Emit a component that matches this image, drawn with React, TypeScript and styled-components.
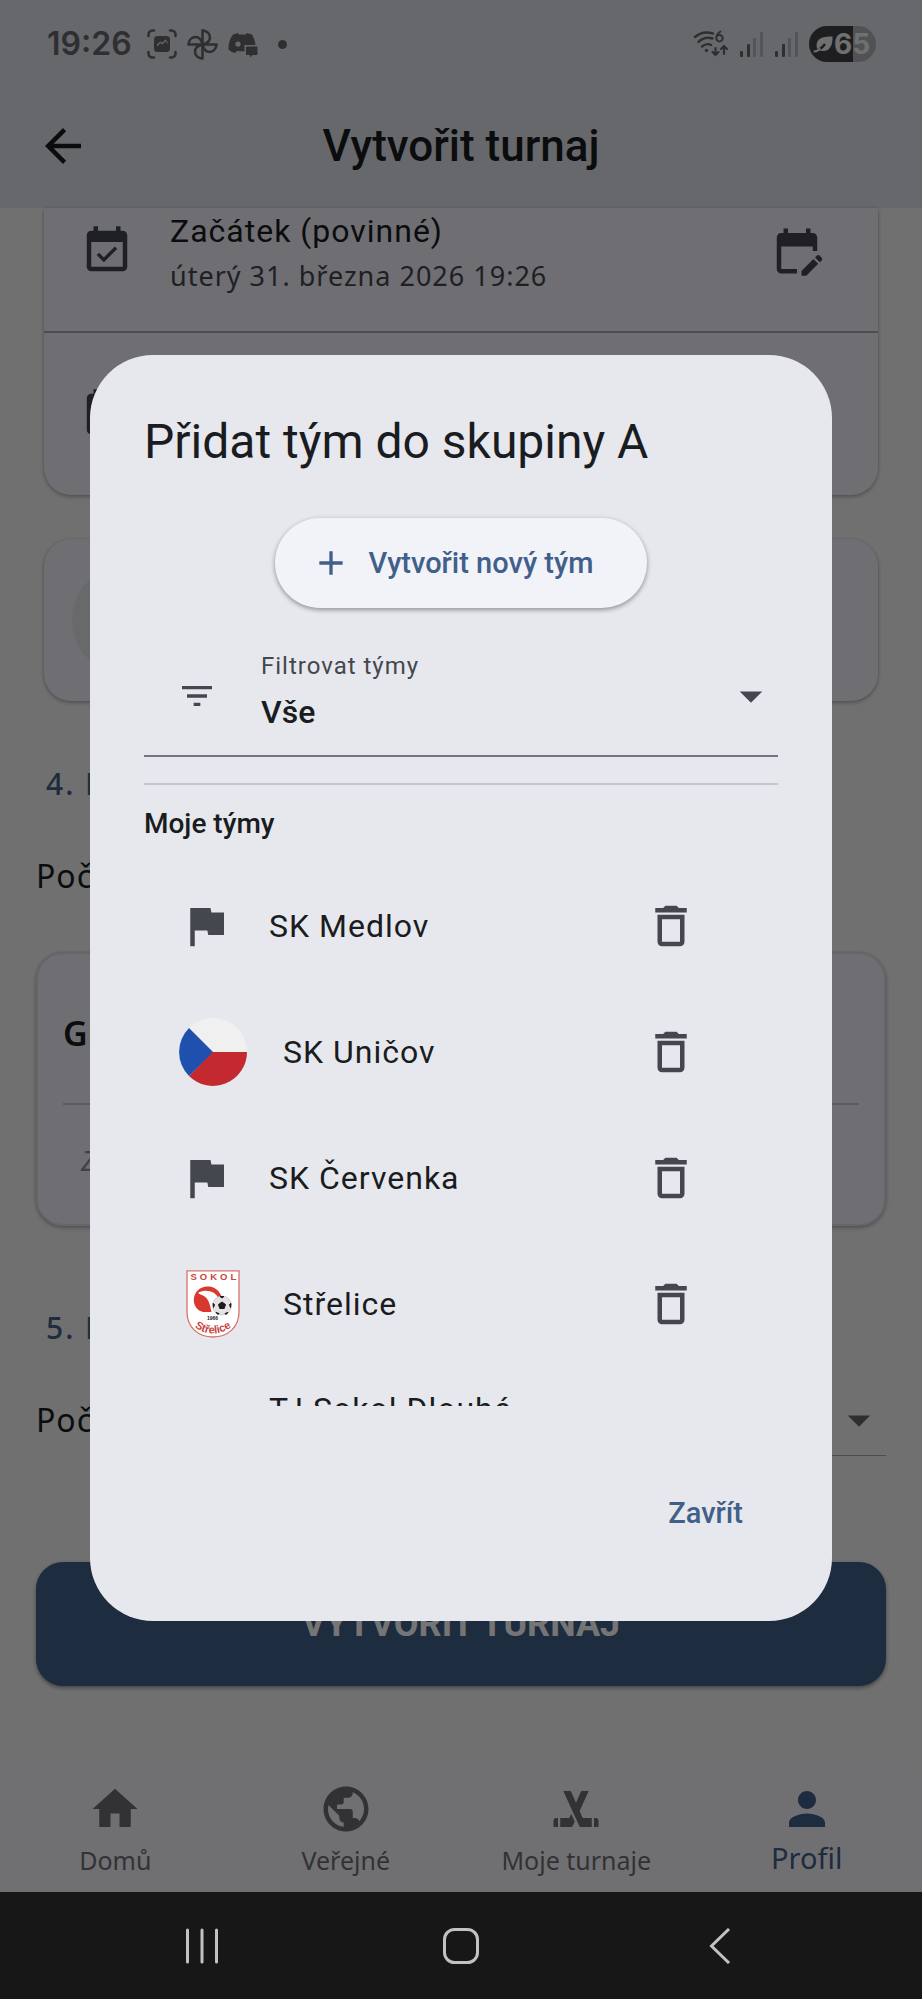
import React from "react";
import styled, { createGlobalStyle } from "styled-components";
import {
  MdAdd,
  MdArrowBack,
  MdArrowDropDown,
  MdDeleteOutline,
  MdEditCalendar,
  MdEvent,
  MdEventAvailable,
  MdFilterList,
  MdFlag,
  MdHome,
  MdPerson,
  MdPublic,
  MdSportsHockey,
} from "react-icons/md";

const c = {
  page: "#f5f5f6",
  bar: "#e1e3e9",
  card: "#f1f0f8",
  line: "#c4c6cf",
  outline: "#73777f",
  text: "#191c20",
  muted: "#44474e",
  primary: "#40608a",
  dialog: "#e7e8ed",
};

const roboto = `Roboto, "Noto Sans", sans-serif`;
const noto = `"Noto Sans", "Open Sans", sans-serif`;

const GlobalStyle = createGlobalStyle`
  *, *::before, *::after { box-sizing: border-box; }
  body { margin: 0; background: #171717; }
  button, select { font: inherit; color: inherit; border: 0; background: none; padding: 0; margin: 0; }
  h1, h2, h3, p, ul { margin: 0; padding: 0; font-weight: inherit; }
  ul { list-style: none; }
  svg { display: block; flex: none; }
`;

const Screen = styled.div`
  display: flex;
  flex-direction: column;
  min-height: 100vh;
  font-family: ${roboto};
  color: ${c.text};
`;

const AppArea = styled.div`
  position: relative;
  flex: 1;
  display: flex;
  flex-direction: column;
  background: ${c.page};
`;

const Header = styled.header`
  background: ${c.bar};
`;

const StatusBar = styled.div`
  display: flex;
  align-items: center;
  justify-content: space-between;
  height: 88px;
  padding: 0 46px 0 47px;
  color: #66686e;
`;

const StatusGroup = styled.div`
  display: flex;
  align-items: center;
  gap: 10px;
`;

const Clock = styled.span`
  font: 600 32px/40px Inter, ${roboto};
  margin-right: 5px;
`;

const Dot = styled.span`
  width: 9px;
  height: 9px;
  margin-left: 10px;
  border-radius: 50%;
  background: currentColor;
`;

const Battery = styled.div`
  display: flex;
  align-items: center;
  width: 67px;
  height: 36px;
  padding-left: 4px;
  border-radius: 18px;
  background: linear-gradient(to right, #434346 44px, #b1b2b7 44px);
  color: #f4f4f6;
  font: 700 28px/36px Inter, ${roboto};
`;

const AppBar = styled.div`
  display: grid;
  grid-template-columns: 54px 1fr 54px;
  align-items: center;
  height: 120px;
  padding: 0 36px 4px;
`;

const PageTitle = styled.h1`
  font-size: 44px;
  line-height: 56px;
  font-weight: 500;
  text-align: center;
`;

const IconButton = styled.button`
  display: flex;
  align-items: center;
  justify-content: center;
  cursor: pointer;
`;

const Main = styled.main`
  flex: 1;
  display: flex;
  flex-direction: column;
  padding: 0 36px 76px;
`;

const Card = styled.section<{ $attached?: boolean; $wide?: boolean }>`
  margin: 0 ${(p) => (p.$wide ? 0 : 8)}px;
  border-radius: ${(p) => (p.$attached ? "0 0 27px 27px" : "27px")};
  background: ${c.card};
  box-shadow: 0 2px 4px rgba(0, 0, 0, 0.26), 0 0 3px rgba(0, 0, 0, 0.12);
`;

const DateRow = styled.div<{ $first?: boolean }>`
  display: flex;
  align-items: center;
  gap: 36px;
  height: ${(p) => (p.$first ? 125 : 162)}px;
  padding: ${(p) => (p.$first ? "0 54px 38px 36px" : "0 54px 0 36px")};
  border-bottom: ${(p) => (p.$first ? "2px solid #a9abb2" : "0")};
  & > svg {
    color: ${c.muted};
  }
`;

const DateText = styled.div`
  flex: 1;
  display: flex;
  flex-direction: column;
  gap: 3px;
  padding-top: 5px;
  letter-spacing: 1px;
`;

const BodyLarge = styled.span`
  font-size: 32px;
  line-height: 42px;
  letter-spacing: 1px;
`;

const BodyMedium = styled.span`
  font: 27px/42px ${noto};
  color: ${c.muted};
`;

const AvatarCard = styled(Card)`
  margin-top: 44px;
  padding: 27px 28px;
`;

const Avatar = styled.div`
  width: 108px;
  height: 108px;
  border-radius: 50%;
  background: #e2e4e9;
`;

const SectionTitle = styled.h2<{ $spaced?: boolean }>`
  margin: ${(p) => (p.$spaced ? 82 : 63)}px 10px 50px;
  font: 500 30px/40px ${noto};
  letter-spacing: 2px;
  color: ${c.primary};
`;

const FieldRow = styled.div`
  display: flex;
  justify-content: space-between;
  font: 32px/44px ${noto};
  letter-spacing: 1px;
`;

const GroupCard = styled(Card)`
  height: 274px;
  margin-top: 54px;
  padding: 55px 25px 0;
  border: 2px solid #dddee4;
`;

const GroupTitle = styled.h3`
  padding-bottom: 46px;
  border-bottom: 2px solid ${c.line};
  font: 600 34px/48px ${noto};
`;

const GroupEmpty = styled.p`
  padding: 34px 18px;
  font: italic 28px/42px ${noto};
  color: #8f9198;
`;

const CountSelect = styled.div`
  display: flex;
  align-items: center;
  height: 58px;
  padding-bottom: 13px;
  border-bottom: 1px solid #a5a6ab;
  & > svg {
    color: #666;
  }
`;

const CountInput = styled.select`
  width: 180px;
  appearance: none;
`;

const SubmitButton = styled.button`
  height: 124px;
  margin-top: 106px;
  border-radius: 27px;
  background: ${c.primary};
  box-shadow: 0 2px 4px rgba(0, 0, 0, 0.4);
  color: #fff;
  font-size: 36px;
  font-weight: 700;
`;

const BottomNav = styled.nav`
  display: grid;
  grid-template-columns: repeat(4, 1fr);
  height: 130px;
  background: #f5f5f8;
`;

const NavItem = styled.a<{ $active?: boolean }>`
  display: flex;
  flex-direction: column;
  align-items: center;
  padding-top: 20px;
  gap: ${(p) => (p.$active ? 2 : 4)}px;
  font: ${(p) => (p.$active ? 29 : 25)}px/40px ${noto};
  color: ${(p) => (p.$active ? c.primary : "#6d6e72")};
  text-decoration: none;
`;

const SystemNav = styled.footer`
  display: flex;
  align-items: center;
  justify-content: space-between;
  height: 108px;
  padding: 0 184px;
  background: #171717;
  color: #c2c2c2;
`;

const Scrim = styled.div`
  position: absolute;
  inset: 0;
  display: flex;
  align-items: center;
  padding: 84px 90px 0;
  background: rgba(0, 0, 0, 0.54);
`;

const Dialog = styled.div`
  flex: 1;
  padding: 54px;
  border-radius: 63px;
  background: ${c.dialog};
`;

const DialogTitle = styled.h2`
  font-size: 48px;
  line-height: 65px;
`;

const CreateButton = styled.button`
  display: flex;
  align-items: center;
  gap: 18px;
  height: 90px;
  margin: 44px auto 28px;
  padding: 0 54px 0 36px;
  border-radius: 45px;
  background: #f1f3f9;
  box-shadow: 0 2px 4px rgba(0, 0, 0, 0.3), 0 1px 6px rgba(0, 0, 0, 0.1);
  color: ${c.primary};
  font-size: 29px;
  font-weight: 500;
  cursor: pointer;
`;

const Filter = styled.div`
  display: flex;
  align-items: center;
  height: 121px;
  padding-left: 33px;
  border-bottom: 2px solid ${c.outline};
  color: ${c.muted};
`;

const FilterField = styled.div`
  flex: 1;
  display: flex;
  flex-direction: column;
  gap: 8px;
  padding: 0 0 7px 44px;
`;

const FilterLabel = styled.label`
  font-size: 24px;
  line-height: 32px;
  letter-spacing: 1px;
`;

const FilterSelect = styled.select`
  appearance: none;
  font-size: 32px;
  line-height: 44px;
  font-weight: 500;
  color: ${c.text};
`;

const Divider = styled.hr`
  height: 2px;
  margin: 26px 0 19px;
  border: 0;
  background: ${c.line};
`;

const ListTitle = styled.h3`
  font-size: 28px;
  line-height: 40px;
  font-weight: 500;
`;

const TeamList = styled.ul`
  height: 543px;
  margin-top: 19px;
  overflow-y: auto;
  scrollbar-width: none;
`;

const TeamRow = styled.li`
  display: flex;
  align-items: center;
  gap: 36px;
  min-height: 126px;
  padding: 18px 80px 18px 35px;
  color: ${c.muted};
`;

const TeamName = styled.span`
  flex: 1;
  font-size: 32px;
  line-height: 48px;
  letter-spacing: 1px;
  color: ${c.text};
`;

const Actions = styled.div`
  display: flex;
  justify-content: flex-end;
  padding-top: 53px;
`;

const TextButton = styled.button`
  height: 108px;
  padding: 0 35px;
  color: ${c.primary};
  font-size: 29px;
  font-weight: 500;
  cursor: pointer;
`;

const CaptureIcon = () => (
  <svg width="30" height="30" viewBox="0 0 30 30" fill="none" stroke="currentColor" strokeWidth="2.6" strokeLinecap="round">
    <path d="M1.5 7V5.5a4 4 0 0 1 4-4H7M23 1.5h1.5a4 4 0 0 1 4 4V7M28.5 23v1.5a4 4 0 0 1-4 4H23M7 28.5H5.5a4 4 0 0 1-4-4V23" />
    <path
      d="M10.500 7h9a3.500 3.500 0 0 1 3.500 3.500v9a3.500 3.500 0 0 1-3.500 3.500h-9A3.500 3.500 0 0 1 7 19.500v-9A3.500 3.500 0 0 1 10.500 7ZM10 17.500l3.500-3.500 2 1.500 3-3.500 2 3v-1.800l-2-3-3.200 3.500-2-1.200L10 15.500Z"
      fill="currentColor"
      fillRule="evenodd"
      stroke="none"
    />
  </svg>
);

const PinwheelIcon = () => (
  <svg width="31" height="31" viewBox="0 0 31 31" fill="none" stroke="currentColor" strokeWidth="2.6" strokeLinejoin="round">
    {[0, 90, 180, 270].map((a) => (
      <path key={a} d="M15.5 15.5V1.400c4.500.6 7.500 3.400 7.500 7.100 0 3.500-3 6-7.500 7Z" transform={`rotate(${a} 15.5 15.5)`} />
    ))}
  </svg>
);

const ChatIcon = () => (
  <svg width="30" height="27" viewBox="0 0 30 27" fill="currentColor">
    <path
      d="M10 2 5 3.500C1.500 8 .3 13 .5 18.500 2.500 20.500 5 21.700 7.500 22l1.300-2.200c2.500.6 5 .7 7.700.4V14h11C27 9.500 25.500 6 24 3.500L19 2l-1 1.600h-7L10 2Zm0 8.500a2.600 2.600 0 1 1 0 5.200 2.600 2.600 0 0 1 0-5.200Z"
      fillRule="evenodd"
    />
    <path d="M19 15.500h9.500a1 1 0 0 1 1 1V23a1 1 0 0 1-1 1h-4L22 26.500V24h-3a1 1 0 0 1-1-1v-6.500a1 1 0 0 1 1-1Z" />
  </svg>
);

const WifiIcon = () => (
  <svg width="36" height="28" viewBox="0 0 36 28" fill="none" stroke="currentColor" strokeWidth="2.4" strokeLinecap="round">
    <path d="M2 7C6.500 3 13 1.300 20 3.500M5.500 12c4-4 9-5 14-3.500M9 16.500c3-2.500 6-3 9-1.500" />
    <circle cx="13.5" cy="20.5" r="1.7" fill="currentColor" stroke="none" />
    <path d="M27.500 1.500c-2.500 1.500-4.200 4-4.200 6.500a3.200 3.200 0 1 0 3.200-3c-1.500 0-2.700.8-3.100 2" strokeWidth="2" />
    <path d="M22.500 18v7m-3-3 3 3 3-3M31 24v-8m-3 3 3-3 3 3" strokeWidth="2.2" />
  </svg>
);

const SignalIcon = () => (
  <svg width="25" height="26" viewBox="0 0 25 26" fill="currentColor">
    <rect x="1" y="20" width="3" height="6" rx="1" />
    <rect x="8" y="13" width="3" height="13" rx="1" />
    <rect x="14" y="7" width="3" height="19" rx="1" opacity=".35" />
    <rect x="21" y="1" width="3" height="25" rx="1" opacity=".35" />
  </svg>
);

const LeafIcon = () => (
  <svg width="21" height="18" viewBox="0 0 21 18">
    <path d="M4 14C2 5 7 1 19.500 1.500 20 11 16 18 7 15.500Z" fill="currentColor" />
    <path d="M1 16c4 0 8-3 11-7" fill="none" stroke="#434346" strokeWidth="2.5" />
    <path d="M.5 16.500c3 .3 5-1 7-3" fill="none" stroke="currentColor" strokeWidth="2" />
  </svg>
);

const CzechFlag = () => (
  <svg width="68" height="68" viewBox="0 0 68 68" role="img" aria-label="Česko">
    <circle cx="34" cy="34" r="34" fill="#f0f0f0" />
    <path d="M33 34h35a34 34 0 0 1-58 24Z" fill="#c3292e" />
    <path d="M10 10a34 34 0 0 0 0 48l24-24Z" fill="#1f50ad" />
  </svg>
);

const StreliceCrest = () => (
  <svg width="68" height="68" viewBox="0 0 68 68" role="img" aria-label="Sokol Střelice">
    <defs>
      <path id="crest-arc" d="M8 51Q34 76 60 51" />
    </defs>
    <path d="M8 .8h52V42c0 15-11 25-26 25S8 57 8 42Z" fill="#fff" stroke="#d9716b" strokeWidth="1.3" />
    <text x="11.5" y="10" fill="#c9443c" fontFamily="Liberation Sans, sans-serif" fontWeight="700" fontSize="9.5" letterSpacing="3">
      SOKOL
    </text>
    <path
      d="M24 42c-11-3-10-15-7.500-18.500C19 18 25 16 30 16.500c6 .5 11 5 12.500 10l-3 2C37 22 28 18.500 19.500 22.500c-1 2 6 2 9 7 2.500 4 3 8 4 12.500Z"
      fill="#d8392f"
    />
    <circle cx="43" cy="35.5" r="9.5" fill="#e4e2e2" stroke="#b9b7b7" strokeWidth=".6" />
    <path d="m43 32 3.500 2.500-1.300 4h-4.400l-1.300-4ZM41 26.500h4l-2 1.500ZM34 33.500l1.500 1-1 3ZM52 33.500l-1.500 1 1 3ZM37 42.500l3 1-1 1ZM49 42.500l-3 1 1 1Z" fill="#1b1b1b" stroke="#1b1b1b" />
    <text x="28" y="50" fill="#222" fontFamily="Liberation Sans, sans-serif" fontWeight="700" fontSize="5">
      1966
    </text>
    <text fill="#c9443c" fontFamily="Liberation Sans, sans-serif" fontWeight="700" fontSize="11">
      <textPath href="#crest-arc" startOffset="50%" textAnchor="middle">
        Střelice
      </textPath>
    </text>
  </svg>
);

const teams = [
  { name: "SK Medlov", mark: <MdFlag size={54} /> },
  { name: "SK Uničov", mark: <CzechFlag /> },
  { name: "SK Červenka", mark: <MdFlag size={54} /> },
  { name: "Střelice", mark: <StreliceCrest /> },
  { name: "TJ Sokol Dlouhé Loučky", mark: <MdFlag size={54} /> },
];

const tabs = [
  { label: "Domů", Icon: MdHome },
  { label: "Veřejné", Icon: MdPublic },
  { label: "Moje turnaje", Icon: MdSportsHockey },
  { label: "Profil", Icon: MdPerson, active: true },
];

export default function App() {
  return (
    <Screen>
      <GlobalStyle />
      <AppArea>
        <Header>
          <StatusBar>
            <StatusGroup>
              <Clock>19:26</Clock>
              <CaptureIcon />
              <PinwheelIcon />
              <ChatIcon />
              <Dot />
            </StatusGroup>
            <StatusGroup>
              <WifiIcon />
              <SignalIcon />
              <SignalIcon />
              <Battery>
                <LeafIcon />
                65
              </Battery>
            </StatusGroup>
          </StatusBar>
          <AppBar>
            <IconButton aria-label="Zpět">
              <MdArrowBack size={54} />
            </IconButton>
            <PageTitle>Vytvořit turnaj</PageTitle>
          </AppBar>
        </Header>

        <Main>
          <Card $attached>
            <DateRow $first>
              <MdEventAvailable size={54} />
              <DateText>
                <BodyLarge>Začátek (povinné)</BodyLarge>
                <BodyMedium>úterý 31. března 2026 19:26</BodyMedium>
              </DateText>
              <MdEditCalendar size={54} />
            </DateRow>
            <DateRow>
              <MdEvent size={54} />
            </DateRow>
          </Card>
          <AvatarCard>
            <Avatar />
          </AvatarCard>

          <SectionTitle>4. Hra</SectionTitle>
          <FieldRow>Počet</FieldRow>
          <GroupCard $wide>
            <GroupTitle>Group</GroupTitle>
            <GroupEmpty>Zatím</GroupEmpty>
          </GroupCard>

          <SectionTitle $spaced>5. Hra</SectionTitle>
          <FieldRow>
            <label htmlFor="count">Počet</label>
            <CountSelect>
              <CountInput id="count" defaultValue="1">
                <option>1</option>
                <option>2</option>
              </CountInput>
              <MdArrowDropDown size={54} />
            </CountSelect>
          </FieldRow>
          <SubmitButton>VYTVOŘIT TURNAJ</SubmitButton>
        </Main>

        <BottomNav>
          {tabs.map(({ label, Icon, active }) => (
            <NavItem key={label} href="#" $active={active}>
              <Icon size={54} />
              {label}
            </NavItem>
          ))}
        </BottomNav>

        <Scrim>
          <Dialog role="dialog" aria-modal="true" aria-labelledby="dialog-title">
            <DialogTitle id="dialog-title">Přidat tým do skupiny A</DialogTitle>
            <CreateButton>
              <MdAdd size={40} />
              Vytvořit nový tým
            </CreateButton>
            <Filter>
              <MdFilterList size={40} />
              <FilterField>
                <FilterLabel htmlFor="filter">Filtrovat týmy</FilterLabel>
                <FilterSelect id="filter" defaultValue="Vše">
                  <option>Vše</option>
                  <option>Moje týmy</option>
                </FilterSelect>
              </FilterField>
              <MdArrowDropDown size={54} />
            </Filter>
            <Divider />
            <ListTitle>Moje týmy</ListTitle>
            <TeamList>
              {teams.map((t) => (
                <TeamRow key={t.name}>
                  {t.mark}
                  <TeamName>{t.name}</TeamName>
                  <IconButton aria-label={`Smazat ${t.name}`}>
                    <MdDeleteOutline size={54} />
                  </IconButton>
                </TeamRow>
              ))}
            </TeamList>
            <Actions>
              <TextButton>Zavřít</TextButton>
            </Actions>
          </Dialog>
        </Scrim>
      </AppArea>

      <SystemNav>
        <IconButton aria-label="Poslední aplikace">
          <svg width="36" height="36" viewBox="0 0 36 36" stroke="currentColor" strokeWidth="3" strokeLinecap="round">
            <path d="M3.500 2v32M18 2v32M32.500 2v32" />
          </svg>
        </IconButton>
        <IconButton aria-label="Domů">
          <svg width="36" height="36" viewBox="0 0 36 36" fill="none" stroke="currentColor" strokeWidth="3">
            <rect x="1.5" y="1.5" width="33" height="33" rx="10" />
          </svg>
        </IconButton>
        <IconButton aria-label="Zpět">
          <svg width="36" height="36" viewBox="0 0 36 36" fill="none" stroke="currentColor" strokeWidth="3">
            <path d="M27 1 9.500 18 27 35" />
          </svg>
        </IconButton>
      </SystemNav>
    </Screen>
  );
}
